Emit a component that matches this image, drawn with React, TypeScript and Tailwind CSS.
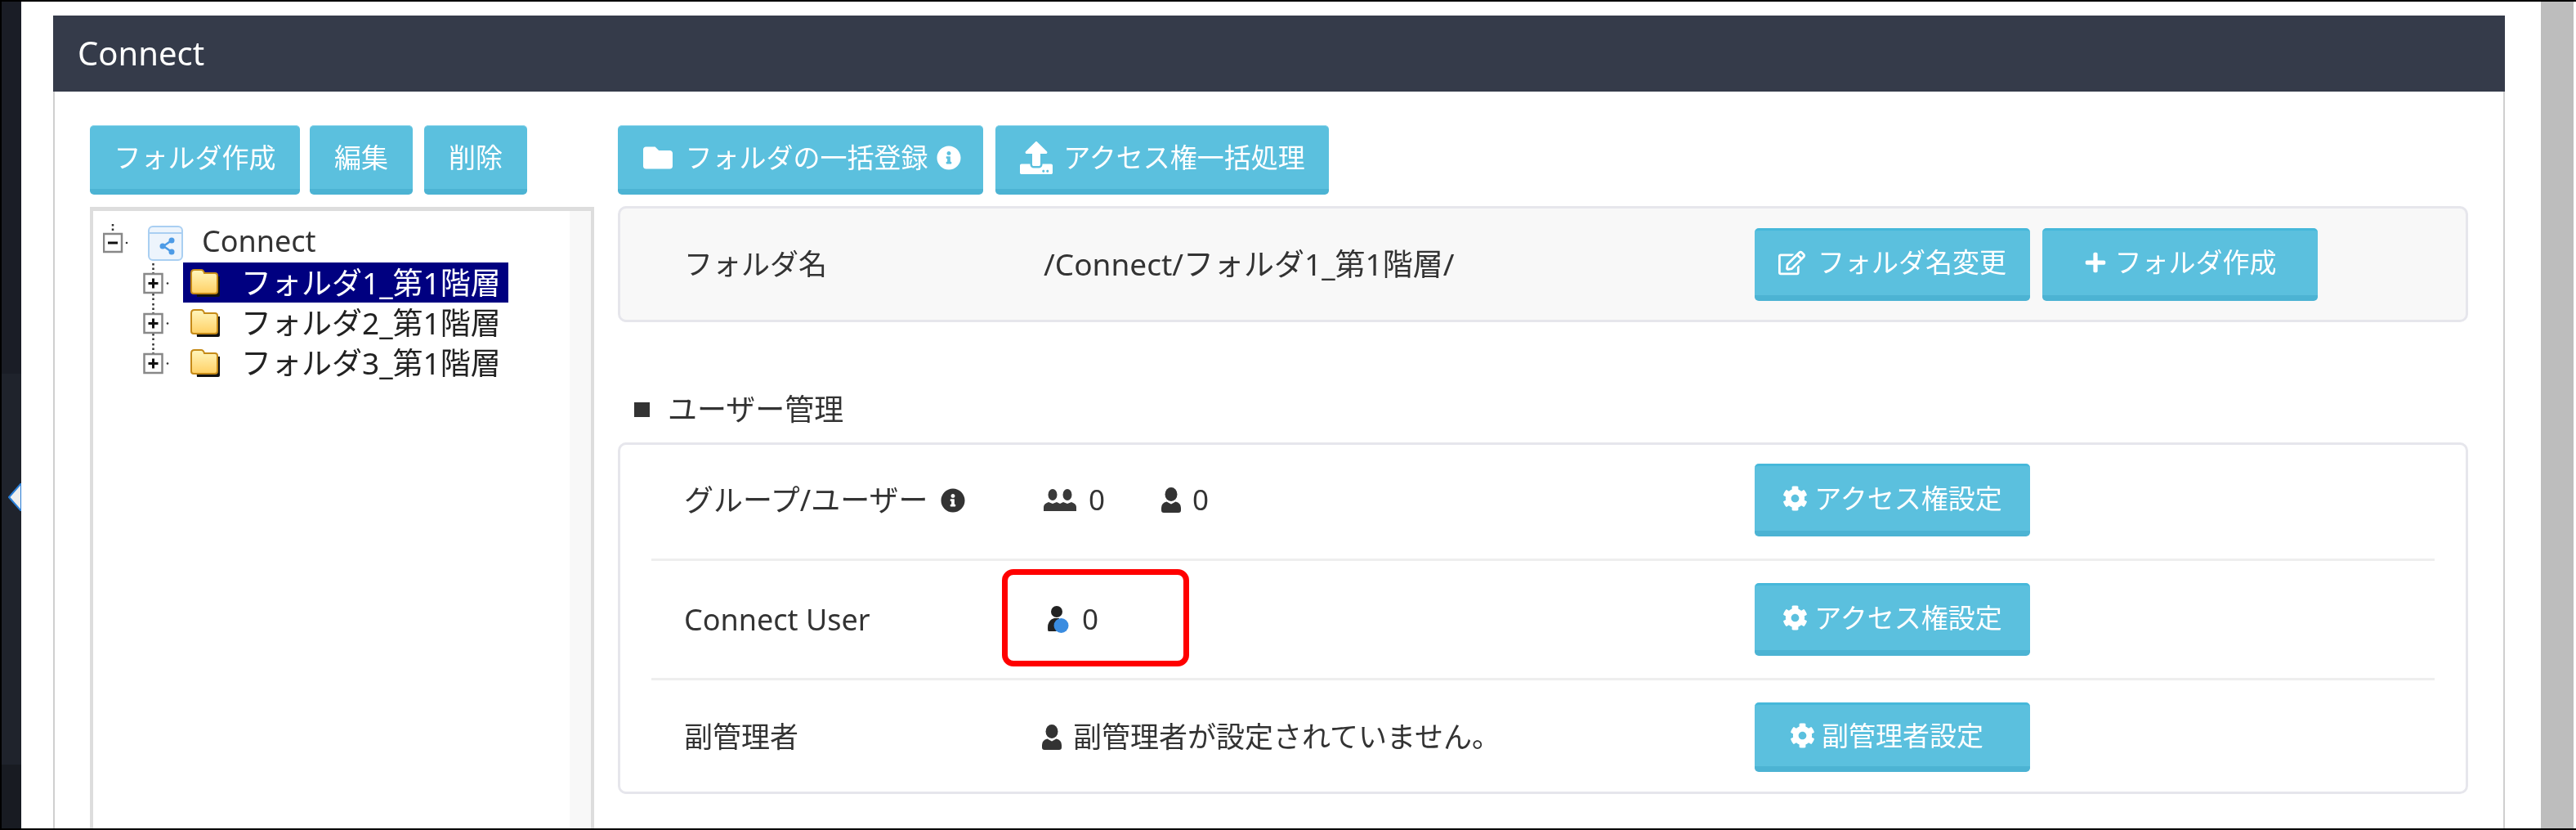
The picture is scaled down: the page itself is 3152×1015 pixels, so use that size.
import type { ReactNode } from 'react'
import { FaCog, FaFolder, FaInfoCircle, FaPlus, FaRegEdit, FaUpload } from 'react-icons/fa'

function ActionButton({ width, size = 'top', children }: { width: string; size?: 'top' | 'tall' | 'low'; children: ReactNode }) {
  const heights = {
    top: 'h-[85px] border-t border-t-[#9fdcee]',
    tall: 'h-[89px] border-t-[3px] border-t-[#46b8da]',
    low: 'h-[85px] border-t-[3px] border-t-[#46b8da]',
  }
  return (
    <button
      className={`${width} ${heights[size]} flex shrink-0 items-center justify-center gap-[10px] rounded-[5px] border-b-[7px] border-b-[#4cb3d3] bg-[#5bc0de] text-[33px] text-white`}
    >
      {children}
    </button>
  )
}

function PersonIcon({ className }: { className?: string }) {
  return (
    <svg viewBox="0 0 26 31" className={className} fill="#333">
      <ellipse cx="13" cy="8.500" rx="7.500" ry="8.500" />
      <path d="M1 25q0-6 6.500-7.500l5.500 3 5.500-3q6.500 1.500 6.500 7.500v3q0 3-3 3h-18q-3 0-3-3z" />
    </svg>
  )
}

function GroupIcon() {
  return (
    <svg viewBox="0 0 40 27" className="h-[27px] w-[40px]" fill="#3a3a3a">
      <ellipse cx="11" cy="7" rx="5.500" ry="7" />
      <ellipse cx="29" cy="7" rx="5.500" ry="7" />
      <path d="M0 27v-5q0-4 6-6l5 2 5-2 4 2 4-2 5 2 5-2q6 2 6 6v5z" />
    </svg>
  )
}

function ConnectUserIcon() {
  return (
    <svg viewBox="0 0 26 33" className="h-[33px] w-[26px]">
      <circle cx="11" cy="7" r="7" fill="#222" />
      <path d="M0 27q0-10 8-12h6v16h-13q-1 0-1-4z" fill="#222" />
      <circle cx="16.500" cy="24" r="9" fill="#3a8ce0" />
    </svg>
  )
}

function RootToggle() {
  return (
    <svg viewBox="0 0 36 48" className="h-[48px] w-[36px] shrink-0">
      <path d="M12 1v11" stroke="#333" strokeWidth="2.500" strokeDasharray="2.500 3" />
      <rect x="1" y="13" width="22" height="22" fill="#fff" stroke="#888" strokeWidth="2.500" />
      <path d="M6 24h12" stroke="#111" strokeWidth="3" />
      <circle cx="29" cy="24" r="1.300" fill="#333" />
    </svg>
  )
}

function RowToggle({ last }: { last?: boolean }) {
  return (
    <svg viewBox="0 0 36 49" className="h-[49px] w-[36px] shrink-0">
      <path d={last ? 'M12.500 1v12' : 'M12.500 1v12M12.500 38v11'} stroke="#333" strokeWidth="2.500" strokeDasharray="2.500 3" />
      <rect x="1.500" y="14" width="22" height="23" fill="#fff" stroke="#888" strokeWidth="2.500" />
      <path d="M6.500 25.500h12M12.500 19.500v12" stroke="#111" strokeWidth="3" />
      <circle cx="30" cy="25.500" r="1.300" fill="#333" />
    </svg>
  )
}

function TreeFolderIcon({ id }: { id: string }) {
  return (
    <svg viewBox="0 0 37 35" className="h-[35px] w-[37px] shrink-0">
      <defs>
        <linearGradient id={id} x1="0" y1="0" x2="0" y2="1">
          <stop offset="0" stopColor="#fff6bd" />
          <stop offset="1" stopColor="#ffd064" />
        </linearGradient>
      </defs>
      <path d="M6 10h30v23q0 2-2 2h-26z" fill="#111" />
      <path
        d="M1 6q0-4 4-4h8q3 0 4 4h13q3 0 3 3v19q0 3-3 3h-26q-3 0-3-3z"
        fill={`url(#${id})`}
        stroke="#c58a18"
        strokeWidth="2"
      />
    </svg>
  )
}

function ConnectRootIcon() {
  return (
    <svg viewBox="0 0 43 43" className="h-[43px] w-[43px] shrink-0">
      <rect x="1" y="1" width="41" height="41" rx="5" fill="#edf4fc" stroke="#a9cff2" strokeWidth="2" />
      <path d="M1 9h41" stroke="#a9cff2" strokeWidth="2" />
      <path d="M29 18l-10 7 10 7" stroke="#4d9be6" strokeWidth="2.500" fill="none" />
      <circle cx="29" cy="18" r="3.500" fill="#4d9be6" />
      <circle cx="18" cy="25" r="3.500" fill="#4d9be6" />
      <circle cx="29" cy="32" r="3.500" fill="#4d9be6" />
    </svg>
  )
}

function TreeRow({ name, id, selected, last }: { name: string; id: string; selected?: boolean; last?: boolean }) {
  return (
    <div className="ml-[49px] flex h-[49px] items-center">
      <RowToggle last={last} />
      <div className={`ml-[13px] flex h-[49px] items-center gap-[25px] px-[9px] text-[37px] ${selected ? 'bg-[#000080] text-white' : 'text-[#222]'}`}>
        <TreeFolderIcon id={id} />
        <span>{name}</span>
      </div>
    </div>
  )
}

export default function App() {
  return (
    <div className="flex h-[1015px] w-[3152px] overflow-hidden border-y-2 border-black bg-white font-['Noto_Sans','Noto_Sans_CJK_JP',sans-serif] text-[#333] blur-[0.5px]">
      {/* collapsed side menu */}
      <div className="relative flex w-[26px] shrink-0 flex-col border-l-2 border-black">
        <div className="h-[455px] bg-[#1a1d26]" />
        <div className="flex-1 bg-[#1f232c]" />
        <div className="h-[78px] bg-[#181b22]" />
        <svg viewBox="0 0 16 34" className="absolute right-0 top-[589px] h-[34px] w-[16px]">
          <path d="M16 0L1 17l15 17z" fill="#eee" stroke="#2a7fd8" strokeWidth="2" />
        </svg>
      </div>

      <div className="flex flex-1 flex-col pl-[39px] pr-[44px] pt-[17px]">
        <div className="flex h-[93px] shrink-0 items-center bg-[#353b4a] pb-[2px] pl-[30px] text-[40px] text-white">Connect</div>

        <div className="flex min-h-0 flex-1 border-x-2 border-[#cfcfcf] pl-[43px] pt-[41px]">
          {/* left: folder tree */}
          <div className="flex w-[617px] shrink-0 flex-col">
            <div className="flex">
              <ActionButton width="w-[257px]">フォルダ作成</ActionButton>
              <div className="ml-[12px]">
                <ActionButton width="w-[126px]">編集</ActionButton>
              </div>
              <div className="ml-[14px]">
                <ActionButton width="w-[126px]">削除</ActionButton>
              </div>
            </div>
            <div className="mt-[15px] flex min-h-0 flex-1 border-x-4 border-t-[5px] border-[#ddd]">
              <div className="flex-1 pl-[12px] pt-[15px]">
                <div className="flex h-[48px] items-center">
                  <RootToggle />
                  <div className="ml-[19px]">
                    <ConnectRootIcon />
                  </div>
                  <span className="mb-[5px] ml-[23px] text-[36px] text-[#333]">Connect</span>
                </div>
                <TreeRow id="folder-a" name="フォルダ1_第1階層" selected />
                <TreeRow id="folder-b" name="フォルダ2_第1階層" />
                <TreeRow id="folder-c" name="フォルダ3_第1階層" last />
              </div>
              <div className="w-[26px] bg-[#f8f8f8]" />
            </div>
          </div>

          {/* right: folder detail */}
          <div className="ml-[29px] flex w-[2264px] shrink-0 flex-col">
            <div className="flex gap-[15px]">
              <ActionButton width="w-[447px]">
                <FaFolder className="h-[36px] w-[42px]" />
                <span className="ml-[3px]">フォルダの一括登録</span>
                <FaInfoCircle className="h-[30px] w-[30px]" />
              </ActionButton>
              <ActionButton width="w-[408px]">
                <FaUpload className="h-[40px] w-[42px]" />
                <span className="ml-[2px]">アクセス権一括処理</span>
              </ActionButton>
            </div>

            <div className="mt-[14px] flex h-[142px] items-center rounded-[10px] border-[3px] border-[#e6e6ec] bg-[#f8f8f8] pl-[78px] text-[35px]">
              <div className="w-[440px] shrink-0">フォルダ名</div>
              <div className="w-[870px] shrink-0 text-[37px]">/Connect/フォルダ1_第1階層/</div>
              <div className="flex gap-[15px]">
                <ActionButton size="tall" width="w-[337px]">
                  <FaRegEdit className="h-[33px] w-[33px]" />
                  <span className="ml-[5px]">フォルダ名変更</span>
                </ActionButton>
                <ActionButton size="tall" width="w-[337px]">
                  <FaPlus className="h-[28px] w-[28px]" />
                  <span>フォルダ作成</span>
                </ActionButton>
              </div>
            </div>

            <div className="flex h-[147px] items-center pl-[20px] pt-[66px] text-[36px]">
              <span className="h-[18px] w-[19px] bg-[#333]" />
              <span className="ml-[22px]">ユーザー管理</span>
            </div>

            <div className="flex h-[430px] flex-col rounded-[10px] border-[3px] border-[#e6e6ec] px-[38px] text-[35px]">
              <div className="flex h-[142px] items-center border-b-[3px] border-[#eee] pb-[4px] pl-[40px]">
                <div className="flex w-[440px] shrink-0 items-center gap-[15px]">
                  <span className="text-[36px]">グループ/ユーザー</span>
                  <FaInfoCircle className="h-[30px] w-[30px]" />
                </div>
                <div className="flex w-[870px] shrink-0 items-center">
                  <GroupIcon />
                  <span className="ml-[15px] w-[20px]">0</span>
                  <PersonIcon className="ml-[68px] h-[31px] w-[26px]" />
                  <span className="ml-[13px]">0</span>
                </div>
                <ActionButton size="tall" width="w-[337px]">
                  <FaCog className="h-[31px] w-[31px]" />
                  <span className="ml-[-2px]">アクセス権設定</span>
                </ActionButton>
              </div>

              <div className="flex h-[146px] items-center border-b-[3px] border-[#eee] pl-[40px]">
                <div className="w-[440px] shrink-0 text-[36px]">Connect User</div>
                <div className="relative flex w-[870px] shrink-0 items-center self-stretch pl-[5px]">
                  <ConnectUserIcon />
                  <span className="ml-[16px]">0</span>
                  <div className="absolute left-[-51px] top-[10px] h-[119px] w-[229px] rounded-[14px] border-[7px] border-[#ff0000]" />
                </div>
                <ActionButton size="tall" width="w-[337px]">
                  <FaCog className="h-[31px] w-[31px]" />
                  <span className="ml-[-2px]">アクセス権設定</span>
                </ActionButton>
              </div>

              <div className="flex flex-1 items-center pl-[40px] pt-[3px]">
                <div className="w-[440px] shrink-0">副管理者</div>
                <div className="flex w-[870px] shrink-0 items-center">
                  <PersonIcon className="ml-[-3px] h-[31px] w-[26px]" />
                  <span className="ml-[13px]">副管理者が設定されていません。</span>
                </div>
                <ActionButton size="low" width="w-[337px]">
                  <FaCog className="h-[31px] w-[31px]" />
                  <span className="ml-[-2px] mr-[14px]">副管理者設定</span>
                </ActionButton>
              </div>
            </div>
          </div>
        </div>
      </div>

      <div className="w-[40px] shrink-0 bg-[#bdbdbd]" />
      <div className="w-[3px] shrink-0 bg-white" />
    </div>
  )
}
